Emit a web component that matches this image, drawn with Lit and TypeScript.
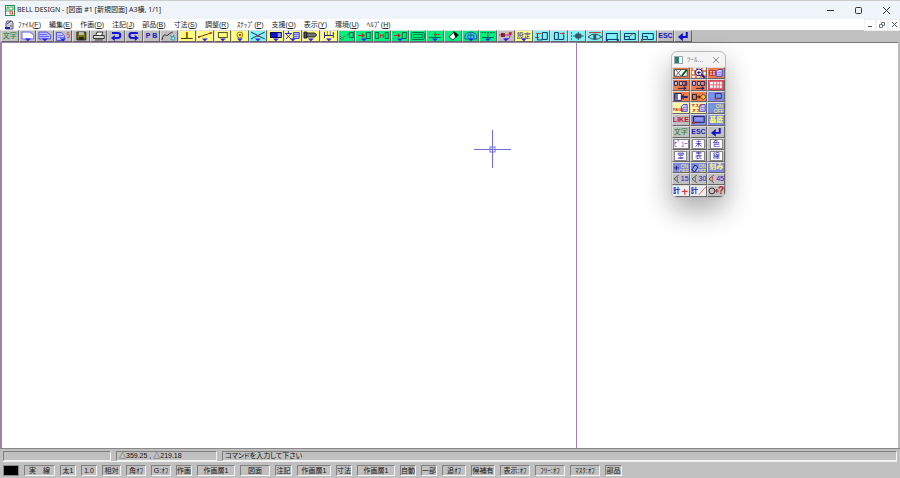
import { LitElement, html, css, svg, nothing, TemplateResult } from "lit";
import { customElement, property } from "lit/decorators.js";
import { classMap } from "lit/directives/class-map.js";

type Art = TemplateResult | typeof nothing;
interface Tool {
  label: string;
  tone: string;
  art?: Art;
  text?: string;
  ink?: string;
  side?: "left" | "right" | "angle";
  framed?: boolean;
}

const drop = svg`<path d="M6 8.500h6l-3 3z" fill="#22f"/>`;
const sheet = svg`<path d="M3 2h8l4 3v4H3z" fill="#fff" stroke="#66e"/>`;
const greenBox = (x: number, w = 5) =>
  svg`<rect x=${x + 0.5} y="2.500" width=${w - 1} height="6" stroke="#064"/>`;
const redArrow = svg`<path d="M3 5.500h5" stroke="#c22"/><path d="M7 3l3 2.500-3 2.500z" fill="#c22"/>`;
const turnBack = svg`<path d="M5 3h6a2 2 0 0 1 0 5H8" stroke="#11d" stroke-width="2"/><path d="M8 5L4 8l4 3z" fill="#11d"/>`;
const turnOn = svg`<path d="M13 3H7a2 2 0 0 0 0 5h3" stroke="#11d" stroke-width="2"/><path d="M10 5l4 3-4 3z" fill="#11d"/>`;
const enter = svg`<path d="M13 2v5H8" stroke="#11c" stroke-width="2"/><path d="M9 3v8L4 7z" fill="#11c"/>`;

const toolbar: Tool[] = [
  { label: "文字", tone: "gray", text: "文字", ink: "green" },
  { label: "新規", tone: "gray", art: svg`${sheet}${drop}` },
  { label: "開く", tone: "gray", art: svg`<path d="M3 2h8l4 3v4H3z" fill="#bbf" stroke="#55d"/><path d="M4 4.500h7M4 6.500h9" stroke="#66e"/>${drop}` },
  { label: "部品を開く", tone: "gray", art: svg`<path d="M2.500 2.500h5l3 3v5h-8z" fill="#ccf" stroke="#55d"/><path d="M4 5.500h5M4 7.500h6" stroke="#66e"/><path d="M15.500 2.500h-2v2h2v3h-2" stroke="#d55"/>${drop}` },
  { label: "保存", tone: "gray", art: svg`<path d="M5 2h9v8H5z" fill="#770" stroke="#222"/><path d="M7 2h5v3H7z" fill="#bbb"/><path d="M7 7h5v3H7z" fill="#222"/>` },
  { label: "印刷", tone: "gray", art: svg`<path d="M6 5l1-3h6l-1 3" fill="#fff" stroke="#333"/><path d="M3.500 5.500h11v3h-11z" fill="#ddd" stroke="#333"/><path d="M5 10h8" stroke="#333"/>` },
  { label: "元に戻す", tone: "gray", art: turnBack },
  { label: "やり直し", tone: "gray", art: turnOn },
  { label: "PB", tone: "gray", text: "P B", ink: "blue" },
  { label: "曲線", tone: "gray", art: svg`<path d="M2 10c2-9 4-3 6-5s3-2 5-3" stroke="#222"/><path d="M10 5l3 3M14 5l-3 5" stroke="#29a"/><path d="M12 7h3v3h-3z" fill="#fff" stroke="#29a"/>` },
  { label: "垂線", tone: "yellow", art: svg`<path d="M9 2v6" stroke="#a50" stroke-width="2"/><path d="M3 8.500h12" stroke="#330"/>` },
  { label: "線", tone: "yellow", art: svg`<path d="M3 7L15 3" stroke="#640"/><path d="M2 6h2v2H2zM14 2h2v2h-2z" fill="#d30"/>${drop}` },
  { label: "矩形", tone: "yellow", art: svg`<rect x="4.500" y="2.500" width="9" height="5" stroke="#552"/>${drop}` },
  { label: "円", tone: "yellow", art: svg`<circle cx="9" cy="5" r="3" stroke="#870"/><path d="M8 4h2v2H8z" fill="#d20"/>${drop}` },
  { label: "消去", tone: "cyan", art: svg`<path d="M2 2l14 7M2 9l14-7" stroke="#136"/><path d="M8 5h2v2H8z" fill="#c22"/>${drop}` },
  { label: "塗り", tone: "yellow", art: svg`<rect x="3.500" y="2.500" width="11" height="5" fill="#11c" stroke="#006"/><path d="M11 3h3v4h-3z" fill="#99f"/>${drop}` },
  { label: "文書", tone: "yellow", art: svg`<path d="M1 3.500h7M4.500 1v2M2 4l5 5M7 4L2 9" stroke="#22c"/><path d="M9.500 2.500h6v6h-6z" fill="#ccf" stroke="#33c"/><path d="M10 4.500h5M10 6.500h5" stroke="#66d"/>${drop}` },
  { label: "ボルト", tone: "yellow", art: svg`<path d="M2 2h3v6H2z" fill="#555" stroke="#111"/><path d="M5 3h8l2 2-2 2H5z" fill="#777" stroke="#222"/>${drop}` },
  { label: "寸法線", tone: "yellow", art: svg`<path d="M4.500 2v6M13.500 2v6M5 5.500h8" stroke="#226"/><path d="M7.500 1v4M10.500 1v4" stroke="#77c"/>${drop}` },
  { label: "移動", tone: "green", art: svg`<path d="M4 8l7-4" stroke="#c33" stroke-dasharray="2 1"/><path d="M2.500 6v3.500h4" stroke="#064" stroke-dasharray="1 1"/><rect x="11.500" y="2.500" width="4" height="5" stroke="#064"/>` },
  { label: "複写", tone: "green", art: svg`${redArrow}${greenBox(11)}${drop}` },
  { label: "反転", tone: "green", art: svg`${greenBox(2, 4)}${greenBox(12, 4)}<path d="M7 5.500h4M7.500 4v4M10.500 4v4" stroke="#c33"/>` },
  { label: "伸縮", tone: "green", art: svg`${redArrow}<path d="M2 2.500h4M2 8.500h3" stroke="#064" stroke-dasharray="1 1"/>${greenBox(11)}${drop}` },
  { label: "枠", tone: "green", art: svg`<rect x="2.500" y="2.500" width="13" height="7" rx="1" stroke="#064"/><rect x="4.500" y="4.500" width="9" height="3" stroke="#084"/>` },
  { label: "延長", tone: "green", art: svg`<path d="M3 7.500h12" stroke="#064"/><path d="M8 4.500h6M9.500 2v5" stroke="#c22"/>${drop}` },
  { label: "消しゴム", tone: "green", art: svg`<path d="M5 7l5-5 4 3-5 5z" fill="#fff" stroke="#333"/><path d="M9 2l1-1 5 4-3 3z" fill="#111"/>` },
  { label: "測定", tone: "green", art: svg`<path d="M3 9V5q6-6 12 0v4z" fill="#4ce" stroke="#067"/><path d="M6 8V5h6v3M9 3v5" stroke="#067"/>${drop}` },
  { label: "整列", tone: "green", art: svg`<path d="M2 2.500h14" stroke="#064" stroke-dasharray="2 1"/><path d="M3 7.500h12" stroke="#064"/><path d="M9 3v4" stroke="#c22"/>${drop}` },
  { label: "属性", tone: "gray", art: svg`<path d="M2 5h11M8 9h4l2-5" stroke="#b2b"/><path d="M4 3h4v4H4z" fill="#822"/><path d="M12 2h3v3h-3z" fill="#c33"/>${drop}` },
  { label: "設定", tone: "yellow", text: "設定", ink: "navy", art: drop },
  { label: "左揃え", tone: "cyan", art: svg`<path d="M3 3.500h5M2 7.500h4" stroke="#c33"/><path d="M4.500 4v6h5M9.500 2.500h5v7h-5z" stroke="#036"/>` },
  { label: "右揃え", tone: "cyan", art: svg`<path d="M4.500 2.500h4v7h-4zM9 9.500h5V5" stroke="#036"/><path d="M10 3.500h5M13.500 2v3" stroke="#c33"/>` },
  { label: "上下", tone: "cyan", art: svg`<path d="M3.500 2v8" stroke="#c33" stroke-dasharray="2 1"/><path d="M5 6h11M10.500 2v8" stroke="#256"/><path d="M8 4h5v4H8z" fill="#456" stroke="#256"/>` },
  { label: "左右", tone: "cyan", art: svg`<path d="M3 2.500h12" stroke="#c33"/><path d="M2 7q7-6 14 0q-7 5-14 0z" stroke="#256"/><path d="M8 5h2v4H8z" fill="#456" stroke="#256"/>` },
  { label: "画面", tone: "cyan", art: svg`<rect x="3.500" y="3.500" width="11" height="6" stroke="#036"/><path d="M3 9h2v2H3zM14 9h2v2h-2z" fill="#22c"/>` },
  { label: "拡大", tone: "cyan", art: svg`<path d="M3.500 3.500h11v6h-11zM3.500 6.500h5v3" stroke="#036"/><path d="M9 6l3-2" stroke="#c33"/>` },
  { label: "縮小", tone: "cyan", art: svg`<path d="M3.500 3.500h11v6H9M3.500 3.500v6h5v-3h-4" stroke="#036"/><path d="M2 9h2v2H2z" fill="#c33"/>` },
  { label: "ESC", tone: "gray", text: "ESC", ink: "blue" },
  { label: "実行", tone: "gray", art: enter },
];

const framed = (text: string): Tool => ({ label: text, tone: "gray", text, ink: "blue", framed: true });
const angle = (text: string): Tool => ({
  label: text + "度",
  tone: "gray",
  text,
  ink: "blue",
  side: "angle",
  art: svg`<path d="M7 2L2 6l5 4" stroke="#555"/><path d="M5.500 4v4" stroke="#d44"/>`,
});
const note = svg`<path d="M9.500 4.500l2-2h4v7h-6z" fill="#ccf" stroke="#44c"/><path d="M11 5.500h4M11 7.500h4" stroke="#88e"/>`;
const onOff = svg`<text x="9" y="6" class="tiny">ON</text><text x="7" y="11" class="tiny">OFF</text>`;
const docs = svg`<path d="M2.500 2.500h3v4h-3zM7.500 2.500h3v4h-3z" fill="#ccd" stroke="#226"/><path d="M11 2.500h4v4h-4" stroke="#226"/><path d="M6 9.500h7" stroke="#226"/><path d="M12 7l3 2.500-3 2z" fill="#226"/>`;

const palette: Tool[] = [
  { label: "画像編集", tone: "orange", art: svg`<path d="M2.500 2.500h13v7h-13z" fill="#fff" stroke="#555"/><path d="M4 3l5 6M4 9l5-6" stroke="#666"/><path d="M10 9l5-6" stroke="#062" stroke-width="2"/>` },
  { label: "虫眼鏡", tone: "orange", art: svg`<path d="M3 2h12v8H3z" stroke="#fff" stroke-width="2" stroke-dasharray="3 2"/><circle cx="9" cy="5.500" r="3.500" fill="#fff" stroke="#118"/><path d="M12 8l3 3" stroke="#118" stroke-width="2"/><path d="M9 4v4M7 5.500h4" stroke="#118"/>` },
  { label: "表", tone: "orange", art: svg`<path d="M2.500 3.500h6v5h-6zM5.500 3v6M2 6h6" fill="#fcc" stroke="#b33"/>${note}` },
  { label: "文書送り", tone: "orange", art: svg`${docs}<path d="M13.500 3v4" stroke="#226"/>` },
  { label: "文書移動", tone: "orange", art: docs },
  { label: "格子", tone: "red", art: svg`<path d="M2.500 2.500h13v7h-13zM3 6h12M6.500 2v8M9.500 2v8M12.500 2v8" fill="#fff" stroke="#d67"/>` },
  { label: "取込", tone: "orange", art: svg`<path d="M2.500 2.500h7v7h-7z" fill="#fff" stroke="#226"/><path d="M3 3h3v6H3z" fill="#66a"/><path d="M16 6h-4" stroke="#226" stroke-width="2"/><path d="M12 3v6L9 6z" fill="#226"/>` },
  { label: "変形", tone: "orange", art: svg`<rect x="2.500" y="3.500" width="4" height="5" stroke="#222"/><path d="M7 6h3" stroke="#222"/><path d="M9 4l2 2-2 2z" fill="#222"/><path d="M13.500 3l3 3-3 3-3-3z" fill="#fb3" stroke="#642"/>` },
  { label: "図形", tone: "blue", art: svg`<path d="M8.500 2.500h6v5h-6z" stroke="#336"/><path d="M3 4h4v2H3zM11 4h3v2h-3z" fill="#5af"/><path d="M8 7h2v2H8z" fill="#c33"/>` },
  { label: "PAGE", tone: "pale", art: svg`${note}<text x="1" y="9" class="page">PAGE</text>` },
  { label: "マスクオフ", tone: "pale", art: svg`${note}<text x="1" y="5" class="page">マスク</text><text x="2" y="10" class="page">オフ</text>` },
  { label: "表示切替", tone: "blue", art: svg`<path d="M2 3l4 2-3 3" stroke="#5ad" stroke-width="2"/>${onOff}` },
  { label: "LIKE", tone: "gray", text: "LIKE", ink: "crimson" },
  { label: "窓", tone: "blue", art: svg`<path d="M3.500 2.500h11v6h-11z" stroke="#226"/><path d="M6 5h6" stroke="#aaf"/><path d="M2 8h3v2H2z" fill="#a33"/>` },
  { label: "基底", tone: "blue", text: "基底", ink: "gold" },
  { label: "文字入力", tone: "gray", text: "文字", ink: "green" },
  { label: "取消", tone: "gray", text: "ESC", ink: "blue" },
  { label: "確定", tone: "gray", art: enter },
  framed("ﾋﾞｭｰ"), framed("未"), framed("色"), framed("堂"), framed("表"), framed("線"),
  { label: "点切替", tone: "blue", art: svg`<path d="M2 6h5M4.500 4v4" stroke="#228"/>${onOff}` },
  { label: "面切替", tone: "blue", art: svg`<path d="M2 8l3-5 3 2-3 5z" fill="#8ae" stroke="#228"/>${onOff}` },
  { label: "刻み", tone: "blue", text: "刻み", ink: "gold" },
  angle("15"), angle("30"), angle("45"),
  { label: "計算 点", tone: "light", text: "計", ink: "blue", side: "left", art: svg`<path d="M10 6.500h6M13 4v6" stroke="#d22"/>` },
  { label: "計算 線", tone: "light", text: "計", ink: "blue", side: "left", art: svg`<path d="M9 10l7-8" stroke="#d66"/>` },
  { label: "問合せ", tone: "gray", text: "?", ink: "crimson", side: "right", art: svg`<circle cx="5" cy="6" r="3" stroke="#333"/><path d="M8 6h4M10 4v4" stroke="#a22"/>` },
];

@customElement("tool-button")
class ToolButton extends LitElement {
  @property({ attribute: false }) tool!: Tool;

  static styles = css`
    :host { display: block; min-width: 0; min-height: 0; }
    button {
      display: grid; grid-template: 100% / 100%; place-items: center; width: 100%; height: 100%;
      box-sizing: border-box; margin: 0; padding: 0; overflow: hidden;
      border: 1px solid; border-color: #ddd #666 #666 #ddd;
      font: 7px/8px "Liberation Sans", "Noto Sans CJK JP", sans-serif;
    }
    button > * { grid-area: 1 / 1; }
    svg { display: block; width: 100%; height: 100%; fill: none; }
    span { z-index: 1; white-space: nowrap; }
    .gray { background: #c0c0c0; }
    .light { background: #eee; }
    .yellow { background: #ffff80; }
    .pale { background: #ffffa0; }
    .green { background: #00f080; }
    .cyan { background: #80f4f4; }
    .orange { background: #f47c48; }
    .red { background: #d84858; }
    .blue { background: #8088e0; }
    .ink-green { color: #16822e; }
    .ink-blue { color: #1818c0; font-weight: 700; }
    .ink-navy { color: #222299; }
    .ink-crimson { color: #c01828; font-weight: 700; }
    .ink-gold { color: #ffff70; font-weight: 700; }
    .left { justify-self: start; }
    .angle { justify-self: end; font-weight: 400; }
    .right { justify-self: end; font-size: 10px; }
    .framed { background: #fff; border: 1px solid #888; line-height: 8px; font-weight: 400; min-width: 13px; box-sizing: border-box; text-align: center; font-feature-settings: "palt"; }
    .tiny { font: 5px "Liberation Sans", sans-serif; fill: #ffff60; }
    .page { font: 700 4px "Liberation Sans", "Noto Sans CJK JP", sans-serif; fill: #c22; }
  `;

  render() {
    const t = this.tool;
    const cls = classMap({
      [`ink-${t.ink}`]: true,
      left: t.side === "left",
      right: t.side === "right",
      angle: t.side === "angle",
      framed: !!t.framed,
    });
    return html`<button class=${t.tone} aria-label=${t.label} title=${t.label}>
      ${t.art ? html`<svg viewBox="1 1 16 10" aria-hidden="true">${t.art}</svg>` : nothing}
      ${t.text ? html`<span class=${cls}>${t.text}</span>` : nothing}
    </button>`;
  }
}

const menus = [
  ["ﾌｧｲﾙ", "F"], ["編集", "E"], ["作画", "D"], ["注記", "J"], ["部品", "B"], ["寸法", "S"],
  ["調整", "R"], ["ｽﾅｯﾌﾟ", "P"], ["支援", "O"], ["表示", "Y"], ["環境", "U"], ["ﾍﾙﾌﾟ", "H"],
];
const modes = [
  "実　線", "太1", "1.0", "相対", "角ｵﾌ", "G:ｵﾌ", "作画", "作画層1", "図面", "注記", "作画層1",
  "寸法", "作画層1", "自動", "一部", "追ｵﾌ", "候補有", "表示:ｵﾌ", "ﾌﾘｰ:ｵﾌ", "ﾏｽｸ:ｵﾌ", "部品",
];

@customElement("app-root")
class AppRoot extends LitElement {
  static styles = css`
    :host {
      display: flex; flex-direction: column; min-height: 100vh; overflow: hidden;
      background: #c0c0c0; color: #222;
      font: 7px/10px "Liberation Sans", "Noto Sans CJK JP", sans-serif;
    }
    button { margin: 0; padding: 0; border: 0; background: none; color: inherit; font: inherit; }
    svg { display: block; }
    header { display: flex; align-items: center; height: 19px; padding-left: 5px; background: #eff4fa; border-top: 1px solid #ccc; box-sizing: border-box; }
    h1 { flex: 1; margin: 0 0 0 2px; font: 400 7px/18px "Noto Sans", "Noto Sans CJK JP", sans-serif; white-space: nowrap; }
    .caption { display: flex; }
    .caption button { display: grid; place-items: center; width: 28px; height: 18px; }
    nav { display: flex; align-items: center; height: 11px; padding-left: 5px; background: #fff; }
    .menus { display: flex; flex: 1; gap: 8px; margin-left: 4px; }
    .menus button { white-space: nowrap; }
    .child { display: flex; }
    .child button { display: grid; place-items: center; width: 10px; height: 10px; border: 1px solid #eee; box-sizing: content-box; }
    .bar { height: 12px; }
    .tools { display: grid; grid-template-columns: repeat(39, 1fr); height: 100%; width: 691px; padding-left: 1px; }
    main { position: relative; display: flex; flex: 1; background: #fff; border-right: 2px solid #bbb; }
    .paper { flex: none; width: 64.2%; box-sizing: border-box; border: solid #a080a8; border-width: 1px 1px 0 2px; }
    .rest { flex: 1; border-top: 1px solid #777; }
    .cursor { position: absolute; left: 473px; top: 88px; }
    .palette {
      position: absolute; left: 671px; top: 9px; width: 55px; box-sizing: border-box;
      border: 1px solid #bbb; border-radius: 6px; background: #f4f4f4;
      box-shadow: 0 12px 28px #0005;
    }
    .palette header { height: 15px; padding: 0 6px 0 2px; background: none; border: 0; gap: 4px; }
    .palette h2 { flex: 1; margin: 0; font: inherit; color: #777; white-space: nowrap; }
    .grid { display: grid; grid-template-columns: repeat(3, 1fr); grid-template-rows: repeat(11, 1fr); height: 130px; border-radius: 0 0 5px 5px; overflow: hidden; }
    footer { background: #c0c0c0; border-top: 1px solid #888; padding: 2px 3px; color: #111; }
    .field, .mode {
      box-sizing: border-box; border: 1px solid; border-color: #808080 #f4f4f4 #f4f4f4 #808080;
      white-space: nowrap; overflow: hidden;
    }
    .info { display: grid; grid-template-columns: 108px 101px 1fr; gap: 5px; }
    .field { height: 10px; line-height: 8px; padding-left: 2px; font-feature-settings: "palt"; }
    .modes {
      display: grid; gap: 5px; padding-top: 3px; border-top: 1px solid #eee;
      grid-template-columns: 16px 31px 16px 16px 19px 20px 20px 16px 38px 30px 17px 34px 16px 38px 16px 16px 24px 24px 30px 30px 30px 17px;
    }
    .mode { height: 11px; line-height: 9px; display: grid; place-content: center; }
    .ink { background: #000; border: 1px solid #888; height: 11px; }
  `;

  render() {
    return html`
      <header>
        <svg width="10" height="11" viewBox="0 0 10 11" aria-hidden="true"><rect x=".5" y=".5" width="9" height="10" fill="#fff" stroke="#2a8f4c"/><path d="M2 5V2h2v3M5 2h3v3H5" fill="none" stroke="#3a5"/><path d="M1 6h4" stroke="#3a5"/><path d="M5 6h2l1 1-1 1 1 1H5z" fill="none" stroke="#d44"/></svg>
        <h1>BELL DESIGN - [図面 #1 [新規図面] A3横, 1/1]</h1>
        <div class="caption">
          <button aria-label="最小化"><svg width="7" height="7"><path d="M0 3.500h7" stroke="#333"/></svg></button>
          <button aria-label="最大化"><svg width="7" height="7"><rect x=".5" y=".5" width="6" height="6" rx="1" fill="none" stroke="#333"/></svg></button>
          <button aria-label="閉じる"><svg width="7" height="7"><path d="M0 0l7 7M7 0L0 7" stroke="#333"/></svg></button>
        </div>
      </header>
      <nav>
        <svg width="9" height="10" viewBox="0 0 9 10" aria-hidden="true"><path d="M2 1h5l1 2v6H1V3z" fill="#cce" stroke="#557"/><path d="M2 4l4-3" stroke="#444"/><path d="M0 7h5v2H0z" fill="#22a"/><path d="M5 5h2v2H5z" fill="#c83"/></svg>
        <div class="menus">${menus.map(([n, k]) => html`<button>${n}(<u>${k}</u>)</button>`)}</div>
        <div class="child">
          <button aria-label="図面を最小化"><svg width="5" height="5"><path d="M0 4.500h4" stroke="#456"/></svg></button>
          <button aria-label="図面を元に戻す"><svg width="6" height="6"><path d="M2.500 2V.500h3v3H4M.500 2.500h3v3h-3z" fill="none" stroke="#678"/></svg></button>
          <button aria-label="図面を閉じる"><svg width="5" height="5"><path d="M0 0l5 5M5 0L0 5" stroke="#456"/></svg></button>
        </div>
      </nav>
      <div class="bar"><div class="tools" role="toolbar">${toolbar.map((t) => html`<tool-button .tool=${t}></tool-button>`)}</div></div>
      <main>
        <div class="paper"></div>
        <div class="rest"></div>
        <svg class="cursor" width="39" height="39" aria-hidden="true"><path d="M1 19.500h37M19.500 0v38" stroke="#7070d8"/><rect x="17" y="17" width="5" height="5" fill="none" stroke="#7070d8"/></svg>
        <section class="palette">
          <header>
            <svg width="9" height="8" viewBox="0 0 9 8" aria-hidden="true"><rect x=".5" y=".5" width="8" height="7" fill="#fff" stroke="#9aa"/><path d="M1 1h4v6H1z" fill="#288078"/></svg>
            <h2>ﾂｰﾙ...</h2>
            <button aria-label="パレットを閉じる"><svg width="6" height="6"><path d="M0 0l6 6M6 0L0 6" stroke="#888"/></svg></button>
          </header>
          <div class="grid">${palette.map((t) => html`<tool-button .tool=${t}></tool-button>`)}</div>
        </section>
      </main>
      <footer>
        <div class="info">
          <div class="field"></div>
          <div class="field">△359.25 , △219.18</div>
          <div class="field">コマンドを入力して下さい</div>
        </div>
        <div class="modes">
          <button class="ink" aria-label="線色"></button>
          ${modes.map((m) => html`<button class="mode">${m}</button>`)}
        </div>
      </footer>`;
  }
}
